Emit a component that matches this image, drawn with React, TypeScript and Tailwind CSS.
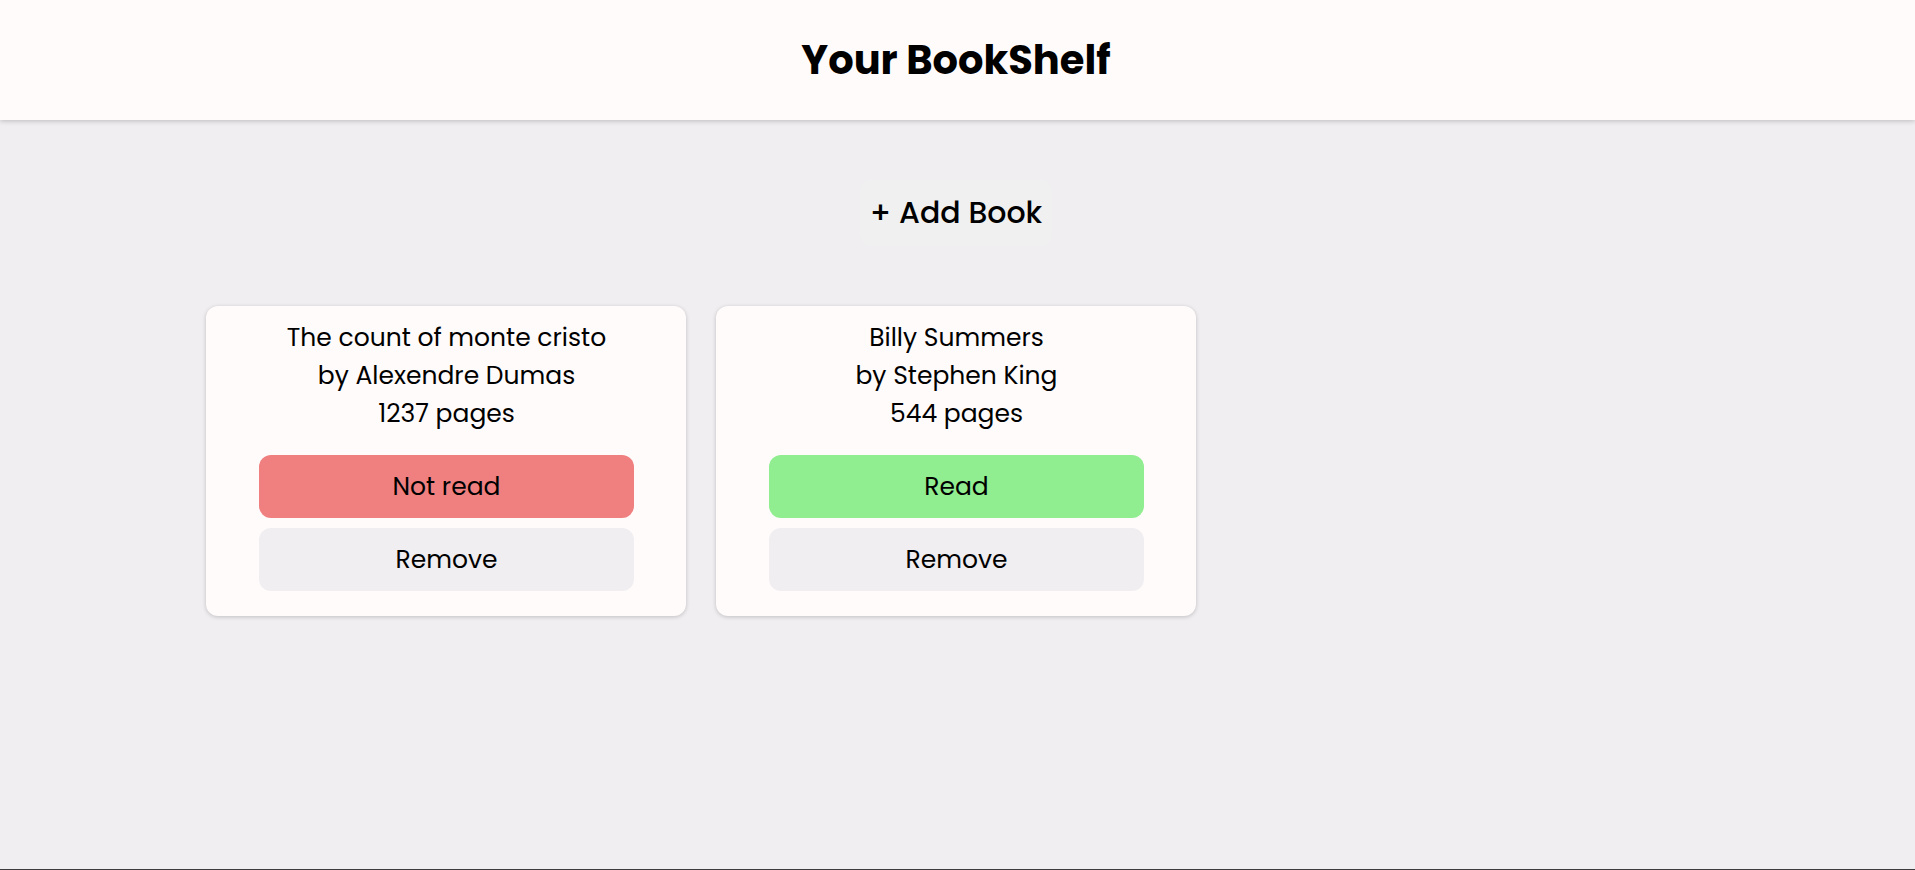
type Book = { title: string; author: string; pages: number; read: boolean };

const books: Book[] = [
  { title: 'The count of monte cristo', author: 'Alexendre Dumas', pages: 1237, read: false },
  { title: 'Billy Summers', author: 'Stephen King', pages: 544, read: true },
];

function BookCard({ book }: { book: Book }) {
  return (
    <article className="flex flex-col items-center rounded-xl bg-[#fffbfa] pt-[13px] pr-[52px] pb-[25px] pl-[53px] text-center shadow-[0_1px_4px_rgba(0,0,0,0.2)]">
      <h2>{book.title}</h2>
      <p>by {book.author}</p>
      <p>{book.pages} pages</p>
      <div className="mt-[22px] flex w-full flex-col gap-[10px]">
        <button type="button" className={`h-[63px] rounded-xl ${book.read ? 'bg-[#90ee90]' : 'bg-[#f08080]'}`}>
          {book.read ? 'Read' : 'Not read'}
        </button>
        <button type="button" className="h-[63px] rounded-xl bg-[#f0eef1]">Remove</button>
      </div>
    </article>
  );
}

export default function App() {
  return (
    <div className="flex min-h-screen flex-col border-b border-[#3c3c3c] bg-[#f0eef1] font-['Poppins','Open_Sans',sans-serif] text-black">
      <header className="flex h-[120px] items-center justify-center bg-[#fffbfa] pr-[3px] shadow-[0_1px_5px_rgba(0,0,0,0.22)]">
        <h1 className="text-[40px] font-bold">Your BookShelf</h1>
      </header>
      <main className="flex flex-col items-center pr-[3px]">
        <button type="button" className="mt-[60px] h-[66px] rounded-xl bg-[#f0f0f0] px-[10px] pb-[2px] text-[30px] font-medium">+ Add Book</button>
        <section className="mt-[60px] grid w-full max-w-[1500px] grid-cols-3 gap-[30px] text-[25px] leading-[38px]">
          {books.map((book) => (
            <BookCard key={book.title} book={book} />
          ))}
        </section>
      </main>
    </div>
  );
}
